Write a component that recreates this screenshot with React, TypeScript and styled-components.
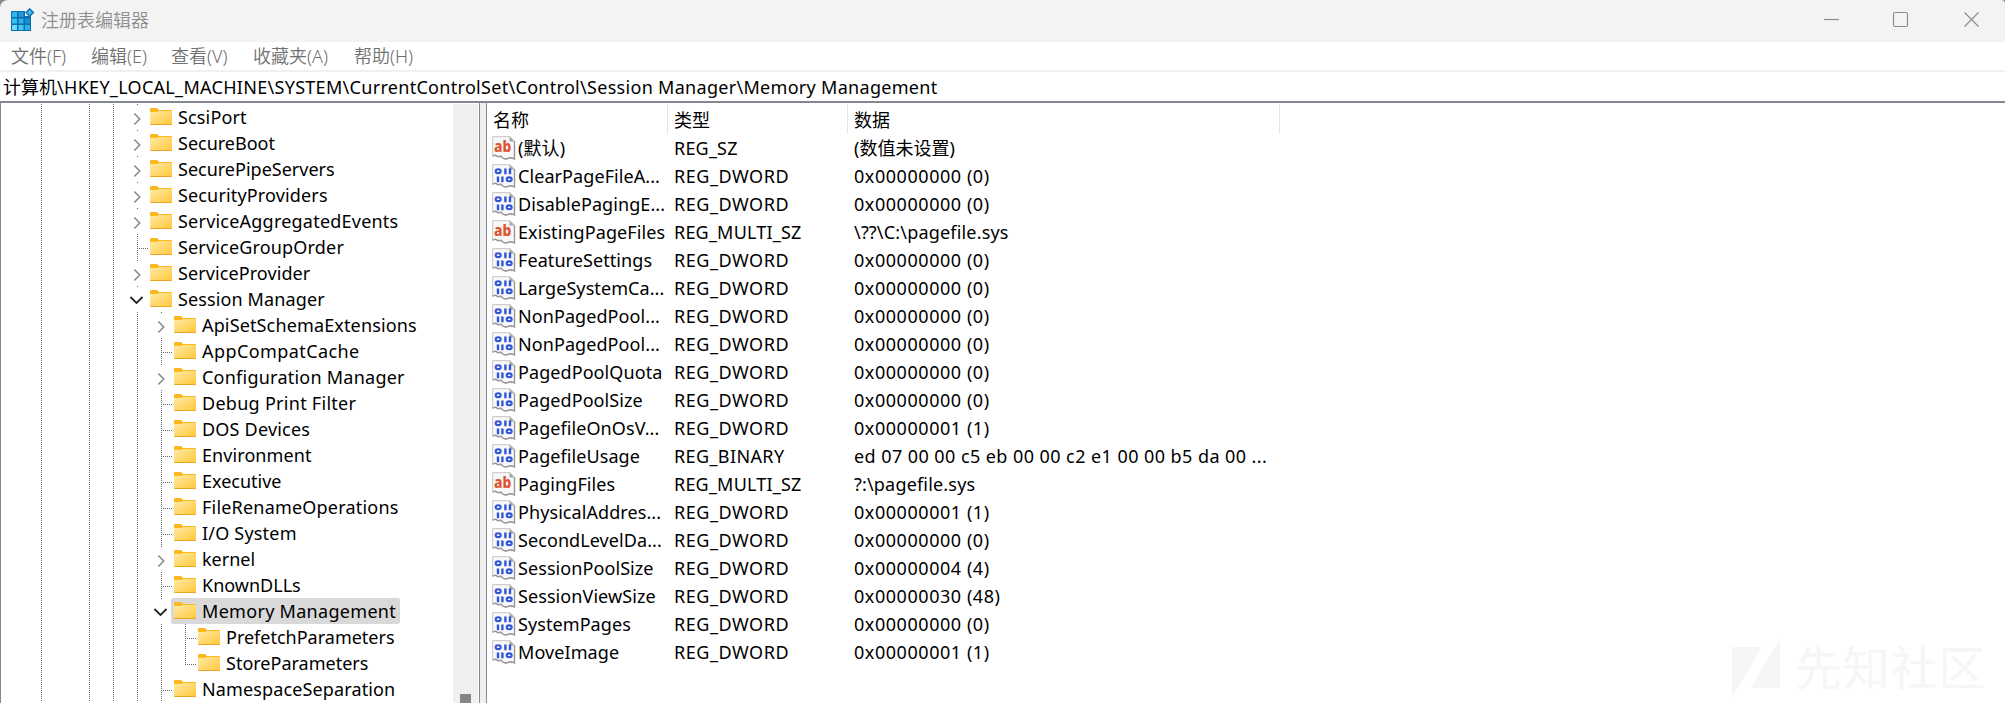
import React from "react";
import styled, { createGlobalStyle } from "styled-components";

const Global = createGlobalStyle`
  *{box-sizing:border-box}
  html,body{margin:0;padding:0;background:#fff;overflow:hidden}
  body{font-family:"Noto Sans","Noto Sans CJK SC",sans-serif;font-size:18px;color:#000;}
`;

const Window = styled.div`
  display:flex;flex-direction:column;width:2005px;height:703px;background:#fff;overflow:hidden;white-space:nowrap;
`;
const TitleBar = styled.header`
  display:flex;align-items:center;height:42px;flex:none;background:#f3f3f3;padding:0 25px 0 11px;color:#8e8e8e;
  border-radius:8px 4px 0 0;
`;
const Frame = styled.div`background:linear-gradient(#8a8a8a,#8a8a8a) 0 0/100% 8px no-repeat;flex:none;`;
const Title = styled.h1`
  margin:0 auto 5px 6px;font-size:18px;font-weight:350;line-height:24px;font-family:"Noto Sans CJK SC",sans-serif;
`;
const AppIcon = styled.svg`width:24px;height:24px;display:block;margin-bottom:2px;`;
const Controls = styled.div`display:flex;align-items:center;gap:52px;margin-bottom:3px;`;
const ControlIcon = styled.svg`
  width:17px;height:17px;display:block;fill:none;stroke:#8c8c8c;stroke-width:1.2;
  &:last-child{margin-left:2px}
`;

const MenuBar = styled.nav`display:flex;align-items:center;height:28px;flex:none;padding-left:11px;color:#707070;`;
const MenuItem = styled.span<{ $w: number }>`width:${(p) => p.$w}px;line-height:28px;font-weight:350;`;

const AddressBar = styled.div`
  height:33px;flex:none;border-top:2px solid #f0f0f0;border-bottom:2px solid #828790;padding:0 0 0 4px;
  display:flex;align-items:center;line-height:28px;letter-spacing:.3px;
`;
const AddressRoot = styled.span`letter-spacing:0;margin-left:-1px;`;
const Body = styled.main`display:flex;flex:1;min-height:0;`;
const TreePane = styled.section`
  display:flex;width:480px;border-left:1px solid #828790;border-right:1px solid #828790;padding:1px 1px 0 0;
`;
const Tree = styled.div`flex:1;min-width:0;overflow:hidden;padding-left:28px;`;
const TreeRow = styled.div`display:flex;height:26px;`;
const vDots = "repeating-linear-gradient(#6a6a6a 0 1px,transparent 1px 2px)";
const hDots = "repeating-linear-gradient(90deg,#6a6a6a 0 1px,transparent 1px 2px)";
type Guide = "none" | "line" | "dot" | "tee" | "end";
const Cell = styled.div<{ $g: Guide }>`
  width:24px;height:26px;flex:none;display:flex;
  background-repeat:no-repeat;
  background-image:${(p) => (p.$g === "none" ? "none" : p.$g === "tee" || p.$g === "end" ? `${vDots},${hDots}` : vDots)};
  background-position:12px 0,12px 14px;
  background-size:${(p) =>
    p.$g === "dot" ? "1px 1px" : p.$g === "end" ? "1px 15px,11px 1px" : "1px 26px,11px 1px"};
`;
const Twisty = styled.svg`width:24px;height:26px;fill:none;display:block;`;
const Node = styled.div<{ $sel?: boolean }>`
  display:flex;align-items:center;padding:0 4px 0 3px;margin-left:-2px;gap:6px;height:26px;line-height:24px;
  border-radius:2px;background:${(p) => (p.$sel ? "#d9d9d9" : "transparent")};
`;
const NodeName = styled.span<{ $track: number }>`padding-bottom:1px;letter-spacing:${(p) => p.$track}px;`;
const FolderSvg = styled.svg`width:22px;height:17px;display:block;margin-top:-1px;flex:none;`;
const ScrollTrack = styled.div`
  width:25px;background:#f0f0f0;display:flex;flex-direction:column;align-items:center;justify-content:flex-end;
`;
const Thumb = styled.div`width:11px;height:9px;background:#858585;`;
const Splitter = styled.div`width:6px;background:#f0f0f0;`;

const ListPane = styled.section`flex:1;border-left:1px solid #828790;padding-top:1px;min-width:0;`;
const columns = "181px 180px 432px 1fr";
const HeaderRow = styled.div`display:grid;grid-template-columns:${columns};height:30px;`;
const HeaderCell = styled.div`
  padding:2px 0 0 6px;line-height:28px;font-weight:400;
  border-right:1px solid #e5e5e5;
`;
const ValueRow = styled.div`display:grid;grid-template-columns:${columns};height:28px;line-height:28px;`;
const NameCell = styled.div`display:flex;align-items:center;padding-left:5px;gap:2px;letter-spacing:.08px;`;
const ValueCell = styled.div<{ $track: number }>`padding-left:6px;letter-spacing:${(p) => p.$track}px;`;
const ValueSvg = styled.svg`width:24px;height:24px;display:block;flex:none;`;

const Watermark = styled.div`
  position:absolute;left:1732px;top:638px;display:flex;align-items:center;gap:14px;color:#f6f6f6;
  font:400 47px/54px "Noto Sans CJK SC",sans-serif;letter-spacing:.8px;
`;
const WatermarkText = styled.span`padding-bottom:5px;`;
const WatermarkLogo = styled.svg`width:49px;height:59px;display:block;fill:#f6f6f6;`;

const Folder = () => (
  <FolderSvg viewBox="0 0 22 17">
    <defs>
      <linearGradient id="folderFill" x1="0" y1="0" x2="1" y2="1">
        <stop offset="0" stopColor="#ffe9a6" />
        <stop offset="1" stopColor="#ffc83a" />
      </linearGradient>
    </defs>
    <path d="M0 1a1 1 0 0 1 1-1h6l2 2h12a1 1 0 0 1 1 1v5H0z" fill="#fbb91d" />
    <path d="M0 4h7l2-1h13v13a1 1 0 0 1-1 1H1a1 1 0 0 1-1-1z" fill="url(#folderFill)" />
    <path d="M0 16h22a1 1 0 0 1-1 1H1a1 1 0 0 1-1-1z" fill="#eba723" />
  </FolderSvg>
);

const ValueIcon = ({ text }: { text: boolean }) => (
  <ValueSvg viewBox="0 0 24 24">
    <path d="M.7 .7H18L22.5 5V23l-3-1.2-3 .4-2.5 1-3-1-2-2-3 .5-2.5-1.5-2.8 1z" fill="#f8f8f8" stroke="#c4c4c4" strokeWidth="1" />
    <path d="M22.5 5V23l-3-1.2-3 .4-2.5 1-3-1-2-2-3 .5-2.5-1.5-2.8 1" fill="none" stroke="#989898" strokeWidth="1.4" />
    <path d="M17.5 .8v4.7h5z" fill="#a5a5a5" />
    {text ? (
      <text x="2" y="16" fontFamily="Noto Sans" fontSize="15.5" fontWeight="800" fill="#dc5430" textLength="17.5" lengthAdjust="spacingAndGlyphs">ab</text>
    ) : (
      <g fill="none" stroke="#2f55d8" strokeWidth="2.1">
        <ellipse cx="6.2" cy="7.2" rx="2.5" ry="1.9" />
        <path d="M13.4 4.4v5.800M18 4.4v5.800M6 12.400v5.800M10.400 12.400v5.800" strokeWidth="2.4" />
        <ellipse cx="17.2" cy="15.300" rx="2.500" ry="1.900" />
      </g>
    )}
  </ValueSvg>
);

const cells = [
  [1, 4, "#35b4ee"], [7.5, 4, "#1c9ada"],
  [1, 10.5, "#35c0f4"], [7.5, 10.5, "#2fb0ec"], [14, 10.5, "#1690d2"],
  [1, 17, "#6bdcff"], [7.5, 17, "#45c8fa"], [14, 17, "#2fb0ec"],
] as const;
const RegistryIcon = () => (
  <AppIcon viewBox="0 0 24 24">
    <path d="M0 3h14v5h6v15H0z" fill="#0b6fab" />
    {cells.map(([x, y, c]) => <rect key={`${x}-${y}`} x={x} y={y} width="5" height="5" fill={c} />)}
    <path d="M18.700-.2l4.700 4.700-4.700 4.700L14 4.500z" fill="#1478b4" />
    <path d="M18.700 2.100l2.400 2.400-2.400 2.400-2.400-2.400z" fill="#46b8ec" />
  </AppIcon>
);

type Item = { name: string; depth: number; track: number; state?: "open" | "closed"; last?: boolean };
const tree: Item[] = [
  { name: "ScsiPort", depth: 0, track: 0.15, state: "closed" },
  { name: "SecureBoot", depth: 0, track: 0, state: "closed" },
  { name: "SecurePipeServers", depth: 0, track: 0, state: "closed" },
  { name: "SecurityProviders", depth: 0, track: 0.15, state: "closed" },
  { name: "ServiceAggregatedEvents", depth: 0, track: 0.22, state: "closed" },
  { name: "ServiceGroupOrder", depth: 0, track: 0.17 },
  { name: "ServiceProvider", depth: 0, track: 0.09, state: "closed" },
  { name: "Session Manager", depth: 0, track: 0.12, state: "open" },
  { name: "ApiSetSchemaExtensions", depth: 1, track: 0.14, state: "closed" },
  { name: "AppCompatCache", depth: 1, track: 0.42 },
  { name: "Configuration Manager", depth: 1, track: 0.24, state: "closed" },
  { name: "Debug Print Filter", depth: 1, track: 0.28 },
  { name: "DOS Devices", depth: 1, track: 0.2 },
  { name: "Environment", depth: 1, track: 0.08 },
  { name: "Executive", depth: 1, track: 0 },
  { name: "FileRenameOperations", depth: 1, track: 0.2 },
  { name: "I/O System", depth: 1, track: 0.2 },
  { name: "kernel", depth: 1, track: 0, state: "closed" },
  { name: "KnownDLLs", depth: 1, track: 0 },
  { name: "Memory Management", depth: 1, track: 0.3, state: "open" },
  { name: "PrefetchParameters", depth: 2, track: 0 },
  { name: "StoreParameters", depth: 2, track: 0, last: true },
  { name: "NamespaceSeparation", depth: 1, track: 0.13 },
];

const D = "REG_DWORD";
const zero = "0x00000000 (0)";
const values: [string, string, string][] = [
  ["(默认)", "REG_SZ", "(数值未设置)"],
  ["ClearPageFileA...", D, zero],
  ["DisablePagingE...", D, zero],
  ["ExistingPageFiles", "REG_MULTI_SZ", "\\??\\C:\\pagefile.sys"],
  ["FeatureSettings", D, zero],
  ["LargeSystemCa...", D, zero],
  ["NonPagedPool...", D, zero],
  ["NonPagedPool...", D, zero],
  ["PagedPoolQuota", D, zero],
  ["PagedPoolSize", D, zero],
  ["PagefileOnOsV...", D, "0x00000001 (1)"],
  ["PagefileUsage", "REG_BINARY", "ed 07 00 00 c5 eb 00 00 c2 e1 00 00 b5 da 00 ..."],
  ["PagingFiles", "REG_MULTI_SZ", "?:\\pagefile.sys"],
  ["PhysicalAddres...", D, "0x00000001 (1)"],
  ["SecondLevelDa...", D, zero],
  ["SessionPoolSize", D, "0x00000004 (4)"],
  ["SessionViewSize", D, "0x00000030 (48)"],
  ["SystemPages", D, zero],
  ["MoveImage", D, "0x00000001 (1)"],
];
const typeTrack = (t: string) => (t === D ? 0.55 : t === "REG_BINARY" ? 0.38 : 0.2);
const dataTrack = (d: string) => (d.startsWith("0x") ? 0.55 : d.startsWith("ed") ? 0.43 : d.startsWith("(") ? 0 : 0.18);

const menus: [string, number][] = [["文件(F)", 80], ["编辑(E)", 80], ["查看(V)", 82], ["收藏夹(A)", 101], ["帮助(H)", 80]];

export default function App() {
  return (
    <Window>
      <Global />
      <Frame>
        <TitleBar>
          <RegistryIcon />
          <Title>注册表编辑器</Title>
          <Controls>
            <ControlIcon viewBox="0 0 17 17"><path d="M1 8.500h15" /></ControlIcon>
            <ControlIcon viewBox="0 0 17 17"><rect x="1.500" y="1.500" width="14" height="14" rx="1.500" /></ControlIcon>
            <ControlIcon viewBox="0 0 17 17"><path d="M1.500 1.500l14 14M15.500 1.500l-14 14" /></ControlIcon>
          </Controls>
        </TitleBar>
      </Frame>
      <MenuBar>{menus.map(([m, w]) => <MenuItem key={m} $w={w}>{m}</MenuItem>)}</MenuBar>
      <AddressBar>
        <AddressRoot>计算机</AddressRoot>
        \HKEY_LOCAL_MACHINE\SYSTEM\CurrentControlSet\Control\Session Manager\Memory Management
      </AddressBar>
      <Body>
        <TreePane>
          <Tree>
            {tree.map((t) => (
              <TreeRow key={t.name}>
                <Cell $g="line" />
                <Cell $g="none" />
                <Cell $g="line" />
                <Cell $g="line" />
                {Array.from({ length: t.depth }, (_, i) => <Cell key={i} $g="line" />)}
                <Cell $g={t.state ? "dot" : t.last ? "end" : "tee"}>
                  {t.state && (
                    <Twisty viewBox="0 0 24 26">
                      {t.state === "closed"
                        ? <path d="M9.300 9.500l5.400 5.500-5.400 5.500" stroke="#8b8b8b" strokeWidth="1.600" />
                        : <path d="M5.500 11l6 6 6-6" stroke="#262626" strokeWidth="1.800" />}
                    </Twisty>
                  )}
                </Cell>
                <Node $sel={t.name === "Memory Management"}>
                  <Folder />
                  <NodeName $track={t.track}>{t.name}</NodeName>
                </Node>
              </TreeRow>
            ))}
          </Tree>
          <ScrollTrack><Thumb /></ScrollTrack>
        </TreePane>
        <Splitter />
        <ListPane>
          <HeaderRow><HeaderCell>名称</HeaderCell><HeaderCell>类型</HeaderCell><HeaderCell>数据</HeaderCell></HeaderRow>
          {values.map(([n, t, d], i) => (
            <ValueRow key={i}>
              <NameCell><ValueIcon text={t.endsWith("SZ")} />{n}</NameCell>
              <ValueCell $track={typeTrack(t)}>{t}</ValueCell>
              <ValueCell $track={dataTrack(d)}>{d}</ValueCell>
            </ValueRow>
          ))}
        </ListPane>
      </Body>
      <Watermark>
        <WatermarkLogo viewBox="0 0 49 59"><path d="M0 9h30L0 59zM48 0v50H19z" /></WatermarkLogo>
        <WatermarkText>先知社区</WatermarkText>
      </Watermark>
    </Window>
  );
}
